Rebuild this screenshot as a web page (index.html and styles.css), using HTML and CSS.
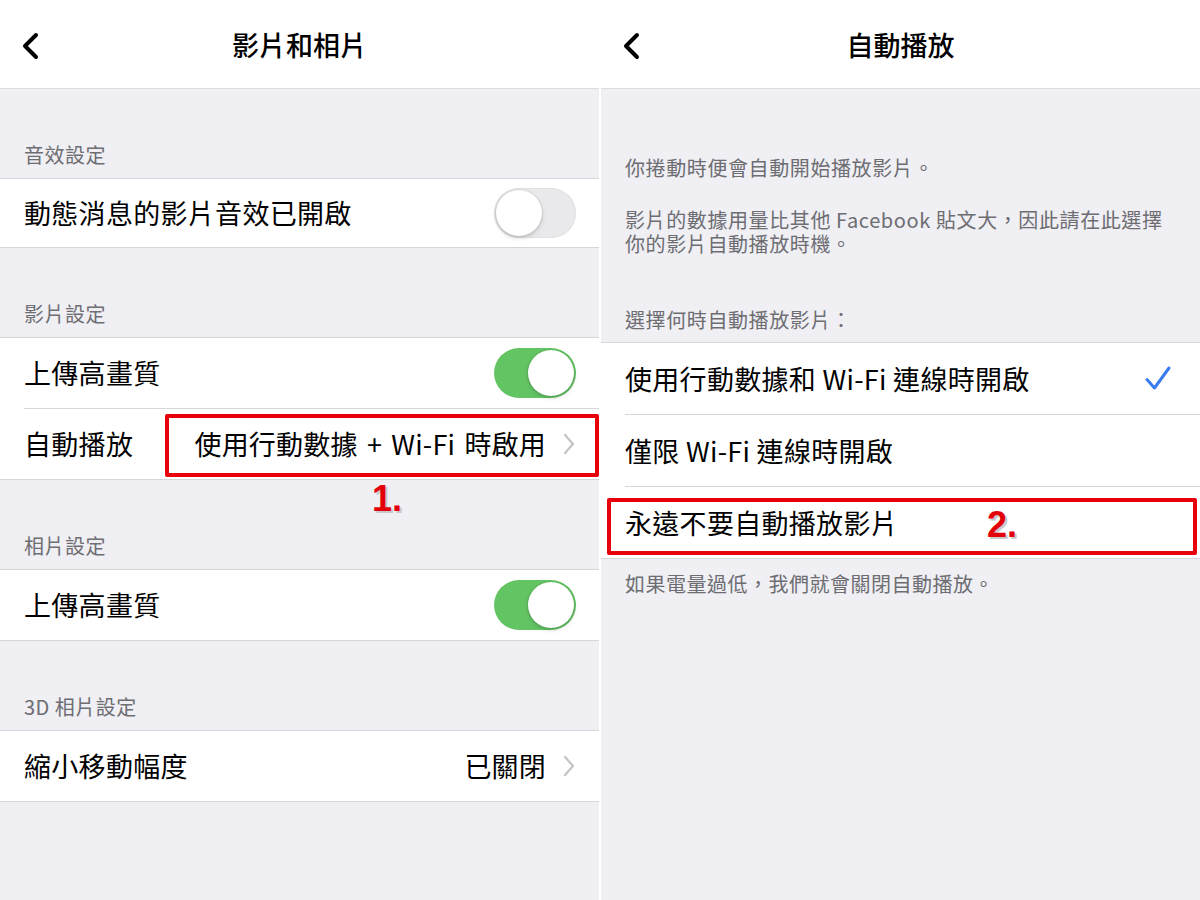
FILE: index.html
```html
<!DOCTYPE html>
<html lang="zh-Hant">
<head>
<meta charset="utf-8">
<title>影片和相片 / 自動播放</title>
<link rel="stylesheet" href="styles.css">
</head>
<body>
<div class="screen">
  <section class="panel panel-left">
    <header class="navbar">
      <span class="back"><svg width="22" height="30" viewBox="0 0 22 30"><path d="M16 4 L5 15 L16 26" fill="none" stroke="#000" stroke-width="4" stroke-linecap="round" stroke-linejoin="round"/></svg></span>
      <h1 class="title">影片和相片</h1>
      <span></span>
    </header>

    <div class="sec-head">音效設定</div>
    <div class="group">
      <div class="row row-first">
        <span class="label">動態消息的影片音效已開啟</span>
        <span class="toggle off"><span class="knob"></span></span>
      </div>
    </div>

    <div class="sec-head">影片設定</div>
    <div class="group">
      <div class="row">
        <span class="label">上傳高畫質</span>
        <span class="toggle on"><span class="knob"></span></span>
      </div>
      <div class="sep"></div>
      <div class="row row-mark">
        <span class="label">自動播放</span>
        <span class="value value-wide">使用行動數據 + Wi-Fi 時啟用<svg class="chev" width="14" height="22" viewBox="0 0 14 22"><path d="M3 2 L11 11 L3 20" fill="none" stroke="#c4c4c7" stroke-width="2.2" stroke-linecap="round" stroke-linejoin="round"/></svg></span>
        <span class="mark-box mark-box-1"></span>
        <span class="mark-num mark-num-1">1.</span>
      </div>
    </div>

    <div class="sec-head">相片設定</div>
    <div class="group">
      <div class="row">
        <span class="label">上傳高畫質</span>
        <span class="toggle on"><span class="knob"></span></span>
      </div>
    </div>

    <div class="sec-head">3D 相片設定</div>
    <div class="group">
      <div class="row">
        <span class="label">縮小移動幅度</span>
        <span class="value">已關閉<svg class="chev" width="14" height="22" viewBox="0 0 14 22"><path d="M3 2 L11 11 L3 20" fill="none" stroke="#c4c4c7" stroke-width="2.2" stroke-linecap="round" stroke-linejoin="round"/></svg></span>
      </div>
    </div>
  </section>

  <section class="panel panel-right">
    <header class="navbar">
      <span class="back"><svg width="22" height="30" viewBox="0 0 22 30"><path d="M16 4 L5 15 L16 26" fill="none" stroke="#000" stroke-width="4" stroke-linecap="round" stroke-linejoin="round"/></svg></span>
      <h1 class="title">自動播放</h1>
      <span></span>
    </header>

    <div class="info">
      <p class="info-p">你捲動時便會自動開始播放影片。</p>
      <p class="info-p info-p2">影片的數據用量比其他 Facebook 貼文大，因此請在此選擇你的影片自動播放時機。</p>
      <p class="info-p info-p3">選擇何時自動播放影片：</p>
    </div>
    <div class="group">
      <div class="row row-opt">
        <span class="label">使用行動數據和 Wi-Fi 連線時開啟</span>
        <svg class="check" width="28" height="28" viewBox="0 0 28 28"><path d="M3 14.5 L10.5 23 L25 3" fill="none" stroke="#3a7bef" stroke-width="3" stroke-linecap="round" stroke-linejoin="round"/></svg>
      </div>
      <div class="sep"></div>
      <div class="row row-opt">
        <span class="label">僅限 Wi-Fi 連線時開啟</span>
      </div>
      <div class="sep"></div>
      <div class="row row-opt">
        <span class="label">永遠不要自動播放影片</span>
        <span class="mark-box mark-box-2"></span>
        <span class="mark-num mark-num-2">2.</span>
      </div>
    </div>
    <p class="foot">如果電量過低，我們就會關閉自動播放。</p>
  </section>
</div>
</body>
</html>
```

FILE: styles.css
```css
* { box-sizing: border-box; }

html, body {
  margin: 0;
  padding: 0;
  background: #ffffff;
}

body {
  font-family: "Noto Sans CJK TC", "Noto Sans", sans-serif;
  color: #000;
}

.screen {
  display: flex;
  gap: 2px;
  width: 1200px;
  height: 900px;
  background: #ffffff;
}

.panel {
  background: #efeff4;
  height: 900px;
  display: flex;
  flex-direction: column;
}

.panel-left { width: 599px; }
.panel-right { width: 599px; }

.navbar {
  height: 89px;
  background: #fff;
  border-bottom: 1px solid #dcdce0;
  display: grid;
  grid-template-columns: 1fr auto 1fr;
  align-items: center;
  padding: 0 20px;
}

.back {
  display: flex;
  align-items: center;
  height: 30px;
  margin-top: 4px;
}

.title {
  margin: 0;
  font-size: 27px;
  font-weight: 500;
  letter-spacing: 0;
  line-height: 34px;
  margin-top: 2px;
}

.sec-head {
  height: 89px;
  display: flex;
  align-items: flex-end;
  padding: 0 0 11px 24px;
  font-size: 20px;
  line-height: 24px;
  color: #6d6d72;
  letter-spacing: 0.5px;
}

.group {
  background: #fff;
  border-top: 1px solid #d6d6da;
  border-bottom: 1px solid #d6d6da;
}

.row {
  position: relative;
  height: 70px;
  display: flex;
  align-items: center;
  justify-content: space-between;
  padding: 0 23px 0 24px;
}

.row-first { height: 68px; }

.label {
  font-size: 27px;
  line-height: 34px;
  letter-spacing: 0.3px;
}

.sep {
  height: 1px;
  background: #d6d6da;
  margin-left: 24px;
}

.value {
  display: flex;
  align-items: center;
  gap: 16px;
  font-size: 27px;
  line-height: 34px;
  letter-spacing: 0.2px;
}

.value-wide {
  word-spacing: 3px;
  letter-spacing: 0.2px;
}

.chev { display: block; }

.toggle {
  position: relative;
  width: 82px;
  height: 50px;
  border-radius: 25px;
  display: block;
}

.toggle.off {
  background: #e9e9eb;
  box-shadow: inset 0 0 0 1px #e2e2e4;
}

.toggle.on {
  background: #63c464;
}

.knob {
  position: absolute;
  top: 2px;
  width: 46px;
  height: 46px;
  border-radius: 50%;
  background: #fff;
  box-shadow: 0 2px 4px rgba(0,0,0,0.18), 0 0 0 1px rgba(0,0,0,0.05);
}

.toggle.off .knob { left: 2px; }
.toggle.on .knob { right: 2px; }

/* right panel */
.info {
  padding: 67px 24px 10px 24px;
}

.info-p {
  margin: 0;
  font-size: 20px;
  line-height: 24px;
  color: #6d6d72;
  letter-spacing: 0.6px;
}

.info-p2 { margin-top: 28px; }
.info-p3 { margin-top: 52px; }

.row-opt {
  height: 71px;
  padding-right: 28px;
}

.check { display: block; }

.foot {
  margin: 0;
  padding: 13px 24px 0 24px;
  font-size: 20px;
  line-height: 24px;
  color: #6d6d72;
  letter-spacing: 0.5px;
}

/* annotations */
.mark-box {
  position: absolute;
  border: 4px solid #e8000a;
  border-radius: 2px;
  pointer-events: none;
}

.mark-box-1 {
  left: 165px;
  right: 0;
  top: 5px;
  bottom: 2px;
}

.mark-box-2 {
  left: 6px;
  right: 3px;
  top: 11px;
  bottom: 3px;
}

.mark-num {
  position: absolute;
  font-family: "Liberation Sans", "DejaVu Sans", sans-serif;
  font-weight: 700;
  font-size: 36px;
  line-height: 36px;
  color: #e3000b;
  text-shadow: 2px 2px 0 #c9c9c9;
}

.mark-num-1 {
  left: 372px;
  top: 72px;
}

.mark-num-2 {
  left: 386px;
  top: 20px;
}
```
